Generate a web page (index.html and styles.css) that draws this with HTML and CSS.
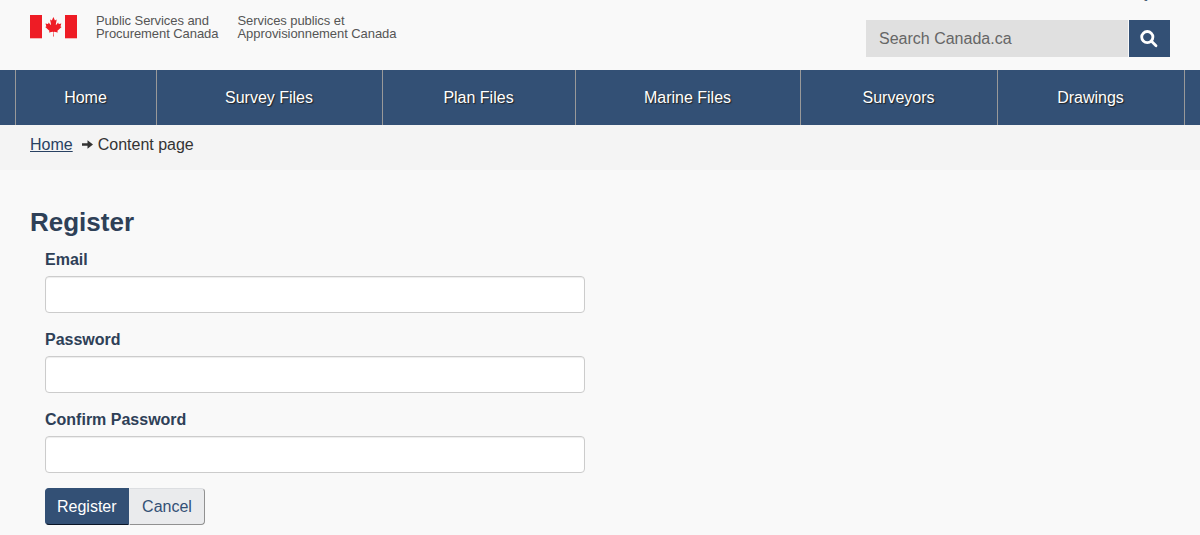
FILE: index.html
```html
<!DOCTYPE html>
<html lang="en">
<head>
<meta charset="utf-8">
<title>Register</title>
<link rel="stylesheet" href="styles.css">
</head>
<body>
<header class="banner">
  <svg class="brand" width="380" height="34" viewBox="0 0 380 34" role="img" aria-label="Public Services and Procurement Canada">
    <g class="flag">
      <rect x="0" y="3" width="12" height="23.3"/>
      <rect x="35" y="3" width="12" height="23.3"/>
      <path transform="translate(23.4 14.7) scale(.0044 .0048)" d="m-90 2030 45-863a95 95 0 0 0-111-98l-859 151 116-320a65 65 0 0 0-20-73l-941-762 212-99a65 65 0 0 0 34-79l-186-572 542 115a65 65 0 0 0 73-38l105-247 423 454a65 65 0 0 0 111-57l-204-1052 327 189a65 65 0 0 0 91-27l332-652 332 652a65 65 0 0 0 91 27l327-189-204 1052a65 65 0 0 0 111 57l423-454 105 247a65 65 0 0 0 73 38l542-115-186 572a65 65 0 0 0 34 79l212 99-941 762a65 65 0 0 0-20 73l116 320-859-151a95 95 0 0 0-111 98l45 863z"/>
    </g>
    <g class="brand-text">
      <text x="66" y="12.600" textLength="113">Public Services and</text>
      <text x="66" y="26" textLength="122.500">Procurement Canada</text>
      <text x="207.500" y="12.600" textLength="107">Services publics et</text>
      <text x="207.500" y="26" textLength="159">Approvisionnement Canada</text>
    </g>
  </svg>
  <div class="tools">
    <a class="lang" href="#">Français</a>
    <form class="search">
      <input class="search-input" type="search" placeholder="Search Canada.ca">
      <button class="search-btn" type="button" aria-label="Search">
        <svg width="18" height="18" viewBox="0 0 18 18"><circle cx="7.300" cy="7.100" r="5.600"/><path d="M11.500 11.300 16 15.700"/></svg>
      </button>
    </form>
  </div>
</header>
<nav class="menu">
  <a href="#">Home</a>
  <a href="#">Survey Files</a>
  <a href="#">Plan Files</a>
  <a href="#">Marine Files</a>
  <a href="#">Surveyors</a>
  <a href="#">Drawings</a>
</nav>
<div class="crumbs">
  <a href="#">Home</a>
  <svg width="11" height="9" viewBox="0 0 11 9"><path d="M0 3.200h5.500V.300L11 4.500 5.500 8.700V5.800H0z"/></svg>
  <span>Content page</span>
</div>
<main class="content">
  <h1>Register</h1>
  <form class="register">
    <label for="email">Email</label>
    <input id="email" type="text">
    <label for="password">Password</label>
    <input id="password" type="password">
    <label for="confirm">Confirm Password</label>
    <input id="confirm" type="password">
    <div class="actions">
      <button class="btn primary" type="button">Register</button>
      <button class="btn secondary" type="button">Cancel</button>
    </div>
  </form>
</main>
</body>
</html>
```
FILE: styles.css
```css
* { box-sizing: border-box; }
html { overflow: hidden; }
body {
  margin: 0;
  background: #f9f9f9;
  color: #333;
  font: 16px/23px "Liberation Sans", Arial, sans-serif;
}
.banner {
  display: flex;
  justify-content: space-between;
  height: 70px;
  padding: 0 30px;
}
.brand { margin-top: 12px; }
.flag { fill: #ee1c25; }
.brand-text { font-size: 13px; fill: #555; }
.tools {
  display: flex;
  flex-direction: column;
  align-items: flex-end;
  margin-top: -19px;
}
.lang { color: #284162; text-decoration: none; height: 39px; }
.search { display: flex; gap: 1px; }
.search-input {
  width: 262px;
  height: 37px;
  padding: 0 13px;
  border: 0;
  border-radius: 0;
  background: #e0e0e0;
  font: inherit;
  appearance: none;
}
.search-input::placeholder { color: #666; opacity: 1; }
.search-btn {
  display: flex;
  align-items: center;
  justify-content: center;
  width: 41px;
  height: 37px;
  padding: 0 1px 0 0;
  border: 0;
  background: #335075;
}
.search-btn svg { fill: none; stroke: #fff; stroke-width: 2.8; stroke-linecap: round; }
.menu {
  display: grid;
  grid-template-columns: 142px 226px 193px 225px 197px 187px;
  height: 55px;
  padding-left: 15px;
  background: #335075;
}
.menu a {
  display: flex;
  align-items: center;
  justify-content: center;
  padding-right: 1px;
  border-right: 1px solid #999;
  color: #fff;
  text-decoration: none;
  text-shadow: 1px 1px 1px #222;
}
.menu a:first-child { border-left: 1px solid #999; }
.crumbs {
  display: flex;
  height: 45px;
  padding: 8px 30px;
  background: #f4f4f4;
}
.crumbs a { color: #284162; }
.crumbs svg { margin: 7px 5px 0 9px; fill: #333; }
.content { padding: 37px 30px 0; }
h1 { margin: 0; color: #2e4057; font-size: 26px; line-height: 30px; }
.register { width: 555px; padding: 11px 0 0 15px; }
.register label {
  display: block;
  margin-bottom: 5px;
  color: #2e4057;
  font-weight: bold;
}
.register input {
  display: block;
  width: 540px;
  height: 37px;
  margin-bottom: 15px;
  border: 1px solid #ccc;
  border-radius: 4px;
  background: #fff;
  box-shadow: inset 0 1px 1px rgba(0, 0, 0, .075);
}
.actions { display: flex; }
.btn { height: 37px; padding: 0 12px; border: 1px solid; font: inherit; }
.primary {
  width: 84px;
  padding: 0 12px 0 11px;
  border-color: #335075 #335075 #091425;
  border-radius: 4px 0 0 4px;
  background: #335075;
  color: #fff;
}
.secondary {
  width: 76px;
  border-color: #dcdee1 #919191 #919191 #eaebed;
  border-radius: 0 4px 4px 0;
  background: #eaebed;
  color: #335075;
}
```
